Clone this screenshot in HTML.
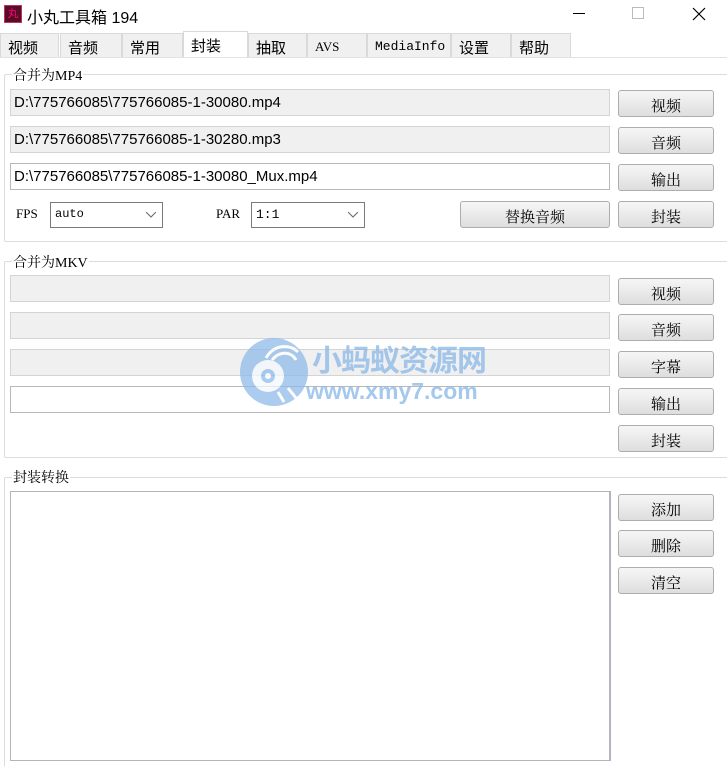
<!DOCTYPE html>
<html><head><meta charset="utf-8">
<style>
*{box-sizing:border-box;margin:0;padding:0}
body{width:727px;height:747px;overflow:hidden;background:#fff;font-family:"Liberation Sans","Noto Sans CJK SC",sans-serif;color:#000;position:relative}
.a{position:absolute}
.tab{position:absolute;top:33px;height:25px;background:#f0f0f0;border:1px solid #d9d9d9;border-bottom:none;font-size:15px;padding:3px 0 0 7px;font-family:"Liberation Sans","Noto Sans CJK SC",sans-serif}
.grp{position:absolute;left:4px;right:-2px;border:1px solid #dcdcdc;border-radius:2px}
.lbl{position:absolute;background:#fff;font-size:14px;padding:0 1px;font-family:"Liberation Serif","Noto Serif CJK SC",serif}
.tb{position:absolute;left:10px;width:600px;height:27px;border:1px solid #d4d4d4;background:#f0f0f0;font-size:15px;padding:4px 0 0 3px;color:#000}
.tb.w{background:#fff;border-color:#b8b8b8}
.btn{position:absolute;left:618px;width:96px;height:27px;border:1px solid #adadad;border-radius:3px;background:linear-gradient(#f6f6f6,#dedede);font-size:15px;text-align:center;padding-top:4px;font-family:"Liberation Serif","Noto Serif CJK SC",serif}
.cb{position:absolute;height:26px;border:1px solid #7a7a7a;background:#fff;font-family:"Liberation Mono",monospace;font-size:12px;padding:4px 0 0 4px}
.cb svg{position:absolute;right:6px;top:9px}
.sm{font-family:"Liberation Serif",serif;font-size:13px}
</style></head><body>
<div class="a" style="left:4px;top:5px;width:18px;height:18px;background:#5a0c22;border:1px solid #c0306a;color:#f08;font-size:11px;text-align:center;line-height:16px">丸</div>
<div class="a" style="left:27px;top:4px;font-size:16px">小丸工具箱 194</div>
<div class="a" style="left:573px;top:13px;width:12px;height:1px;background:#000"></div>
<div class="a" style="left:632px;top:7px;width:12px;height:12px;border:1px solid #bbb"></div>
<svg class="a" style="left:692px;top:7px" width="14" height="14"><path d="M1 1L13 13M13 1L1 13" stroke="#000" stroke-width="1.2"/></svg>
<div class="tab" style="left:0;width:59px">视频</div>
<div class="tab" style="left:60px;width:62px">音频</div>
<div class="tab" style="left:122px;width:61px">常用</div>
<div class="tab" style="left:183px;top:31px;height:27px;width:65px;background:#fff">封装</div>
<div class="tab" style="left:248px;width:59px">抽取</div>
<div class="tab sm" style="left:307px;width:60px;font-size:13px;padding-top:5px;font-family:'Liberation Serif',serif">AVS</div>
<div class="tab" style="left:367px;width:84px;font-size:13px;padding-top:5px;font-family:'Liberation Mono',monospace">MediaInfo</div>
<div class="tab" style="left:451px;width:60px">设置</div>
<div class="tab" style="left:511px;width:60px">帮助</div>
<div class="a" style="left:0;top:57px;width:727px;height:1px;background:#e3e3e3"></div>
<div class="grp" style="top:74px;height:168px"></div>
<div class="lbl" style="left:12px;top:65px">合并为MP4</div>
<div class="tb" style="top:89px">D:\775766085\775766085-1-30080.mp4</div>
<div class="tb" style="top:126px">D:\775766085\775766085-1-30280.mp3</div>
<div class="tb w" style="top:163px">D:\775766085\775766085-1-30080_Mux.mp4</div>
<div class="btn" style="top:90px">视频</div>
<div class="btn" style="top:127px">音频</div>
<div class="btn" style="top:164px">输出</div>
<div class="btn" style="top:201px">封装</div>
<div class="btn" style="left:460px;width:150px;top:201px">替换音频</div>
<div class="a sm" style="left:16px;top:206px">FPS</div>
<div class="cb" style="left:50px;top:202px;width:113px">auto<svg width="10" height="6"><path d="M0 0L5 5L10 0" fill="none" stroke="#666"/></svg></div>
<div class="a sm" style="left:216px;top:206px">PAR</div>
<div class="cb" style="left:251px;top:202px;width:114px;font-size:13px">1:1<svg width="10" height="6"><path d="M0 0L5 5L10 0" fill="none" stroke="#666"/></svg></div>
<div class="grp" style="top:261px;height:197px"></div>
<div class="lbl" style="left:12px;top:252px">合并为MKV</div>
<div class="tb" style="top:275px"></div>
<div class="tb" style="top:312px"></div>
<div class="tb" style="top:349px"></div>
<div class="tb w" style="top:386px"></div>
<div class="btn" style="top:278px">视频</div>
<div class="btn" style="top:314px">音频</div>
<div class="btn" style="top:351px">字幕</div>
<div class="btn" style="top:388px">输出</div>
<div class="btn" style="top:425px">封装</div>
<div class="grp" style="top:477px;height:290px;border-bottom:none"></div>
<div class="lbl" style="left:12px;top:467px">封装转换</div>
<div class="a" style="left:10px;top:491px;width:601px;height:270px;border:1px solid #b4b4bc;border-right:2px solid #b4b4c0;background:#fff"></div>
<div class="btn" style="top:494px">添加</div>
<div class="btn" style="top:530px">删除</div>
<div class="btn" style="top:567px">清空</div>
<svg class="a" style="left:238px;top:336px;opacity:.75" width="72" height="72"><circle cx="36" cy="36" r="34" fill="#8fbbe9"/><circle cx="30" cy="40" r="16" fill="#fff" opacity=".9"/><circle cx="30" cy="40" r="7" fill="#8fbbe9"/><circle cx="30" cy="40" r="3" fill="#fff"/><path d="M28 22C36 8 52 8 60 16M34 24C42 14 54 16 58 24" stroke="#fff" stroke-width="3" fill="none"/><path d="M40 56L46 66M50 52L58 62" stroke="#fff" stroke-width="3"/></svg>
<div class="a" style="left:312px;top:339px;font-size:30px;font-weight:bold;color:#8fbbe9;opacity:.8;letter-spacing:-1px;font-family:'Noto Sans CJK SC',sans-serif;line-height:38px">小蚂蚁资源网</div>
<div class="a" style="left:306px;top:377px;font-size:23px;font-weight:bold;color:#8fbbe9;opacity:.8;line-height:28px">www.xmy7.com</div>
</body></html>
